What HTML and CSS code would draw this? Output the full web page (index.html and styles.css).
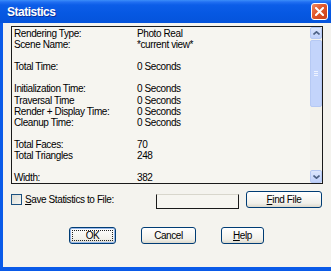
FILE: index.html
```html
<html lang="en">

<head>
    <meta charset="UTF-8">
    <title>Statistics</title>
    <link rel="stylesheet" href="styles.css">
</head>

<body>
    <div class="window">
        <!-- Title bar -->
        <div class="titlebar">
            <span class="title">Statistics</span>
            <button class="close-btn" title="Close">
                <svg width="9" height="9" viewBox="0 0 9 9">
                    <path d="M1 1 L8 8 M8 1 L1 8" stroke="#fff" stroke-width="2" stroke-linecap="square" />
                </svg>
            </button>
        </div>

        <div class="client">
            <!-- Statistics list -->
            <div class="list">
                <div class="list-body">
                    <div class="row"><span>Rendering Type:</span><span>Photo Real</span></div>
                    <div class="row"><span>Scene Name:</span><span>*current view*</span></div>
                    <div class="row"></div>
                    <div class="row"><span>Total Time:</span><span>0 Seconds</span></div>
                    <div class="row"></div>
                    <div class="row"><span>Initialization Time:</span><span>0 Seconds</span></div>
                    <div class="row"><span>Traversal Time</span><span>0 Seconds</span></div>
                    <div class="row"><span>Render + Display Time:</span><span>0 Seconds</span></div>
                    <div class="row"><span>Cleanup Time:</span><span>0 Seconds</span></div>
                    <div class="row"></div>
                    <div class="row"><span>Total Faces:</span><span>70</span></div>
                    <div class="row"><span>Total Triangles</span><span>248</span></div>
                    <div class="row"></div>
                    <div class="row"><span>Width:</span><span>382</span></div>
                </div>
                <div class="scrollbar">
                    <div class="sb-btn">
                        <svg width="7" height="4" viewBox="0 0 7 4"><path d="M0.5 3.5 L3.5 0.8 L6.5 3.5" stroke="#4d6185" stroke-width="1.6" fill="none" /></svg>
                    </div>
                    <div class="sb-thumb"><span class="grip"></span></div>
                    <div class="sb-track"></div>
                    <div class="sb-btn">
                        <svg width="7" height="4" viewBox="0 0 7 4"><path d="M0.5 0.5 L3.5 3.2 L6.5 0.5" stroke="#4d6185" stroke-width="1.6" fill="none" /></svg>
                    </div>
                </div>
            </div>

            <!-- Save to file -->
            <div class="options">
                <label class="save">
                    <span class="checkbox"></span>
                    <span><u>S</u>ave Statistics to File:</span>
                </label>
                <div class="file-field"></div>
                <button class="btn find-btn"><u>F</u>ind File</button>
            </div>

            <!-- Dialog buttons -->
            <div class="actions">
                <button class="btn ok-btn"><span class="focus">OK</span></button>
                <button class="btn cancel-btn">Cancel</button>
                <button class="btn help-btn"><u>H</u>elp</button>
            </div>
        </div>
    </div>
</body>

</html>
```

FILE: styles.css
```css
body {
    margin: 0;
    width: 331px;
    height: 271px;
    overflow: hidden;
    font-family: "Liberation Sans", Arial, sans-serif;
    font-size: 10px;
    letter-spacing: -0.4px;
    color: #000;
}

.window {
    display: flex;
    flex-direction: column;
    height: 271px;
    background: #0a5ae8;
}

.titlebar {
    height: 23px;
    display: flex;
    align-items: center;
    justify-content: space-between;
    padding: 0 3px 0 7px;
    background: linear-gradient(to bottom, #3c8ef9 0, #2270f2 2px, #0c5de8 5px, #0658e2 60%, #0553db 100%);
}

.title {
    color: #fff;
    font-weight: bold;
    font-size: 12px;
    letter-spacing: -0.5px;
    text-shadow: 1px 1px 0 #0a2f9c;
    margin-top: 1px;
}

.close-btn {
    width: 17px;
    height: 17px;
    padding: 0;
    border: 1px solid #fff;
    border-radius: 3px;
    background: linear-gradient(135deg, #f08a62, #e0562a 45%, #c8401a);
    display: flex;
    align-items: center;
    justify-content: center;
    margin-top: -1px;
}

.client {
    flex: 1;
    margin-left: 3px;
    margin-bottom: 4px;
    padding: 3px 0 0 8px;
    background: #f4f3ee;
}

.list {
    width: 312px;
    height: 158px;
    box-sizing: border-box;
    border: 1px solid #1a1a1a;
    background: #f6f5f0;
    display: flex;
}

.list-body {
    flex: 1;
    padding: 1px 0 0 2px;
    line-height: 11.1px;
    overflow: hidden;
}

.row {
    display: grid;
    grid-template-columns: 123px 1fr;
    height: 11.1px;
}

.scrollbar {
    width: 12px;
    display: flex;
    flex-direction: column;
    background: #f3f2ec;
}

.sb-btn {
    height: 12px;
    box-sizing: border-box;
    border: 1px solid #b6c9f4;
    border-radius: 2px;
    background: linear-gradient(to bottom, #dce6fd, #bfd0fa);
    display: flex;
    align-items: center;
    justify-content: center;
}

.sb-btn:last-child {
    height: 13px;
}

.sb-thumb {
    margin-top: 1px;
    height: 67px;
    box-sizing: border-box;
    border: 1px solid #b6c9f4;
    border-radius: 2px;
    background: #c3d4fb;
    display: flex;
    align-items: center;
    justify-content: center;
}

.grip {
    width: 4px;
    height: 5px;
    background: repeating-linear-gradient(to bottom, #eef3ff 0, #eef3ff 1px, transparent 1px, transparent 2px);
}

.sb-track {
    flex: 1;
}

.options {
    display: flex;
    align-items: flex-start;
    margin-top: 7px;
    height: 18px;
}

.save {
    width: 145px;
    display: flex;
    align-items: center;
    gap: 3px;
    margin-top: 3px;
}

.checkbox {
    width: 11px;
    height: 11px;
    box-sizing: border-box;
    border: 1px solid #1c5180;
    background: linear-gradient(135deg, #dcdbd3, #f6f6f3);
}

.file-field {
    width: 83px;
    height: 15px;
    box-sizing: border-box;
    margin-top: 3px;
    border: 1px solid #1a1a1a;
    border-top-color: #d8d6cc;
    background: #f6f5f0;
}

.btn {
    height: 17px;
    box-sizing: border-box;
    padding: 0;
    border: 1px solid #003c74;
    border-radius: 3px;
    background: linear-gradient(to bottom, #ffffff, #f1f0ea 75%, #dcd8cc);
    font-family: "Liberation Sans", Arial, sans-serif;
    font-size: 10px;
    letter-spacing: -0.4px;
    color: #000;
}

.find-btn {
    width: 76px;
    margin-left: 7px;
}

.actions {
    display: flex;
    gap: 25px;
    margin-top: 18px;
    padding-left: 58px;
}

.ok-btn {
    width: 47px;
    padding: 2px;
    box-shadow: inset 0 0 0 1px #98b8ea;
}

.focus {
    display: block;
    height: 100%;
    box-sizing: border-box;
    border: 1px dotted #222;
    line-height: 9px;
}

.cancel-btn {
    width: 55px;
}

.help-btn {
    width: 43px;
}
```
